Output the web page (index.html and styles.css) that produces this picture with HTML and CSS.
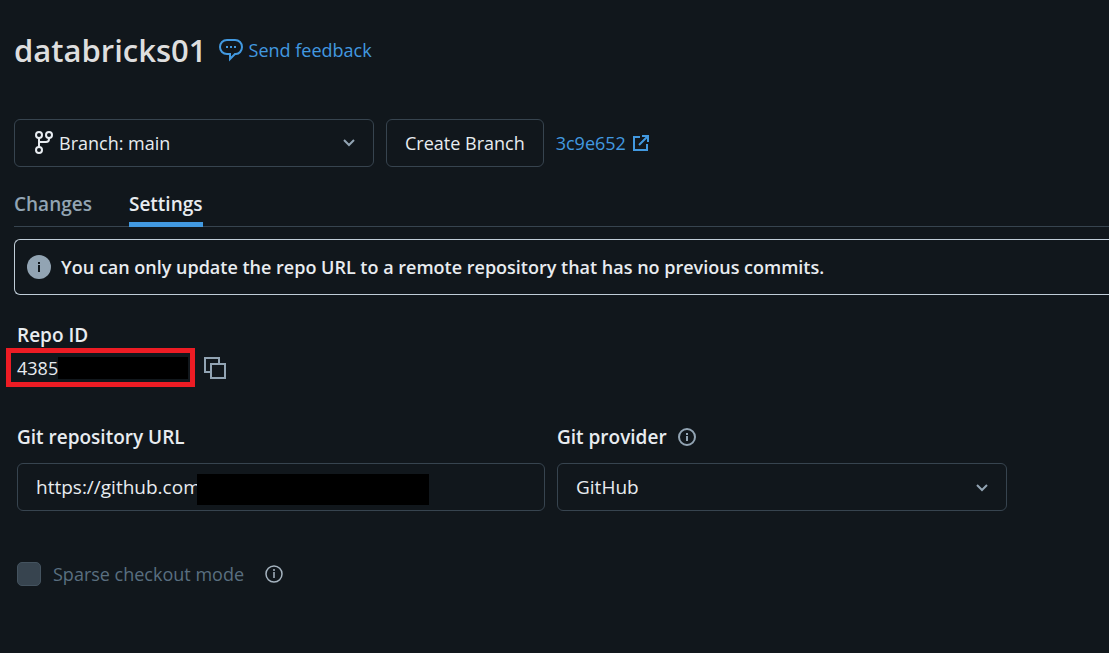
FILE: index.html
```html
<!DOCTYPE html>
<html lang="en">
<head>
    <meta charset="UTF-8">
    <meta name="viewport" content="width=device-width, initial-scale=1.0">
    <title>databricks01 - Settings</title>
    <link rel="stylesheet" href="styles.css">
</head>
<body>
    <header class="header">
        <h1>databricks01</h1>
        <a class="link feedback" href="#feedback">
            <svg width="24" height="24" viewBox="0 0 24 24" fill="none" stroke="currentColor" stroke-width="2">
                <path d="M8 2h8c4 0 7 3 7 7s-3 7-6 7h-1l-5 5v-5H8c-4 0-7-3-7-7s3-7 7-7z"/>
                <path d="M7 9h2M11 9h2M15 9h2"/>
            </svg>
            Send feedback
        </a>
    </header>

    <div class="toolbar">
        <button class="btn branch" type="button">
            <svg width="20" height="24" viewBox="0 0 20 24" fill="none" stroke="currentColor" stroke-width="2">
                <circle cx="5" cy="4" r="3"/>
                <circle cx="15" cy="4" r="3"/>
                <circle cx="5" cy="19" r="3"/>
                <path d="M5 7v9M15 7v1q0 3-3 3H5"/>
            </svg>
            <span class="branch-name">Branch: main</span>
            <svg class="chevron" width="14" height="10" viewBox="0 0 14 10" fill="none" stroke="currentColor" stroke-width="2">
                <path d="M2 2l5 5 5-5"/>
            </svg>
        </button>
        <button class="btn" type="button">Create Branch</button>
        <a class="link commit" href="#3c9e652">
            3c9e652
            <svg width="18" height="18" viewBox="0 0 18 18" fill="none" stroke="currentColor" stroke-width="2">
                <path d="M8 3H2v13h13v-6M10 2h6v6M16 2L7 11"/>
            </svg>
        </a>
    </div>

    <nav class="tabs">
        <a class="tab" href="#changes">Changes</a>
        <a class="tab active" href="#settings">Settings</a>
    </nav>

    <div class="banner">
        <svg width="24" height="24" viewBox="0 0 24 24">
            <circle class="disc" cx="12" cy="12" r="12"/>
            <path class="mark" d="M11 7h2v2h-2zM11 10h2v7h-2z"/>
        </svg>
        You can only update the repo URL to a remote repository that has no previous commits.
    </div>

    <main class="settings">
        <section class="repo">
            <h2 class="label">Repo ID</h2>
            <div class="repo-row">
                <div class="repo-id">4385<span class="hidden-id"></span></div>
                <button class="icon-btn" type="button" aria-label="Copy repo ID">
                    <svg width="22" height="22" viewBox="0 0 22 22" fill="none" stroke="currentColor" stroke-width="2">
                        <path d="M7 15H1V1h14v6"/>
                        <path d="M7 7h14v14H7z"/>
                    </svg>
                </button>
            </div>
        </section>

        <form class="fields">
            <div class="field">
                <div class="label-row">
                    <label class="label" for="repo-url">Git repository URL</label>
                </div>
                <div class="control">
                    <input class="input" id="repo-url" type="text" value="https://github.com">
                    <span class="hidden-path"></span>
                </div>
            </div>
            <div class="field">
                <div class="label-row">
                    <label class="label" for="provider">Git provider</label>
                    <svg class="info" width="18" height="18" viewBox="0 0 18 18" fill="none" stroke="currentColor" stroke-width="2">
                        <circle cx="9" cy="9" r="8"/>
                        <path d="M9 5v2M9 8v5"/>
                    </svg>
                </div>
                <div class="control">
                    <select class="input" id="provider">
                        <option>GitHub</option>
                    </select>
                    <svg class="chevron select-chevron" width="14" height="10" viewBox="0 0 14 10" fill="none" stroke="currentColor" stroke-width="2">
                        <path d="M2 2l5 5 5-5"/>
                    </svg>
                </div>
            </div>
        </form>

        <div class="sparse">
            <input class="checkbox" id="sparse" type="checkbox" disabled>
            <label for="sparse">Sparse checkout mode</label>
            <svg class="info light" width="20" height="20" viewBox="0 0 20 20" fill="none" stroke="currentColor" stroke-width="1.500">
                <circle cx="10" cy="10" r="8"/>
                <path d="M10 5v2M10 8v6"/>
            </svg>
        </div>
    </main>
</body>
</html>
```
FILE: styles.css
```css
* {
    box-sizing: border-box;
}
body {
    margin: 0;
    padding: 20px 0 0 14px;
    background-color: #11171c;
    color: #e8ecf0;
    font-family: "Open Sans", "Segoe UI", sans-serif;
    font-size: 18px;
    line-height: 28px;
    overflow-x: hidden;
}
h1, h2 { margin: 0; }
svg { flex: none; }
button, input, select { font: inherit; color: inherit; }

.header {
    display: flex;
    align-items: center;
    gap: 12px;
    height: 60px;
}
h1 {
    color: #dedede;
    font-size: 31px;
    font-weight: 600;
    line-height: 40px;
}
.link {
    display: flex;
    align-items: center;
    color: #4299e0;
    text-decoration: none;
}
.feedback { gap: 6px; }
.commit { gap: 6px; }

.toolbar {
    display: flex;
    gap: 12px;
    margin-top: 39px;
}
.btn {
    height: 48px;
    padding: 0 18px;
    background: none;
    border: 1px solid #37444f;
    border-radius: 6px;
    cursor: pointer;
}
.branch {
    display: flex;
    align-items: center;
    gap: 5px;
    width: 360px;
    padding: 0 17px 0 19px;
}
.branch-name {
    flex: 1;
    text-align: left;
}
.chevron { color: #92a4b3; }

.tabs {
    display: flex;
    gap: 37px;
    height: 60px;
    padding-top: 23px;
    border-bottom: 1px solid #37444f;
    font-size: 19px;
}
.tab {
    height: 37px;
    color: #92a4b3;
    font-weight: 600;
    text-decoration: none;
}
.active {
    color: #e8ecf0;
    border-bottom: 5px solid #4299e0;
}

.banner {
    display: flex;
    align-items: center;
    gap: 10px;
    height: 56px;
    margin-top: 12px;
    padding-left: 12px;
    border: 1px solid #c0cdd8;
    border-right: none;
    border-radius: 6px 0 0 6px;
    font-weight: 600;
    white-space: nowrap;
}
.disc { fill: #92a4b3; }
.mark { fill: #11171c; }

.settings {
    padding: 26px 102px 0 3px;
}
.label {
    font-size: 19px;
    font-weight: 600;
    line-height: 28px;
}
.repo-row {
    display: flex;
    align-items: center;
    gap: 9px;
    margin-top: -1px;
    margin-left: -11px;
}
.repo-id {
    display: flex;
    align-items: center;
    height: 39px;
    padding: 0 2px 0 6px;
    border: 5px solid #ed1c24;
}
.hidden-id {
    width: 130px;
    height: 22px;
    background-color: #000;
}
.icon-btn {
    display: flex;
    padding: 0;
    background: none;
    border: none;
    color: #92a4b3;
    cursor: pointer;
}

.fields {
    display: grid;
    grid-template-columns: 528fr 450fr;
    gap: 12px;
    margin-top: 36px;
}
.label-row {
    display: flex;
    align-items: center;
    gap: 11px;
}
.info { color: #92a4b3; }
.control {
    position: relative;
    margin-top: 12px;
}
.input {
    display: block;
    width: 100%;
    height: 48px;
    padding: 0 18px;
    background: none;
    border: 1px solid #37444f;
    border-radius: 6px;
    font-size: 19px;
    appearance: none;
}
.input option { background-color: #11171c; }
.hidden-path {
    position: absolute;
    top: 11px;
    left: 180px;
    width: 232px;
    height: 31px;
    background-color: #000;
}
.select-chevron {
    position: absolute;
    top: 20px;
    right: 18px;
    pointer-events: none;
}

.sparse {
    display: flex;
    align-items: center;
    gap: 12px;
    margin-top: 49px;
    color: #5a6f80;
}
.checkbox {
    width: 24px;
    height: 24px;
    margin: 0;
    appearance: none;
    background-color: #37444f;
    border: 1px solid #44535f;
    border-radius: 5px;
}
.light {
    margin-left: 8px;
    color: #a6b4c0;
}
```
